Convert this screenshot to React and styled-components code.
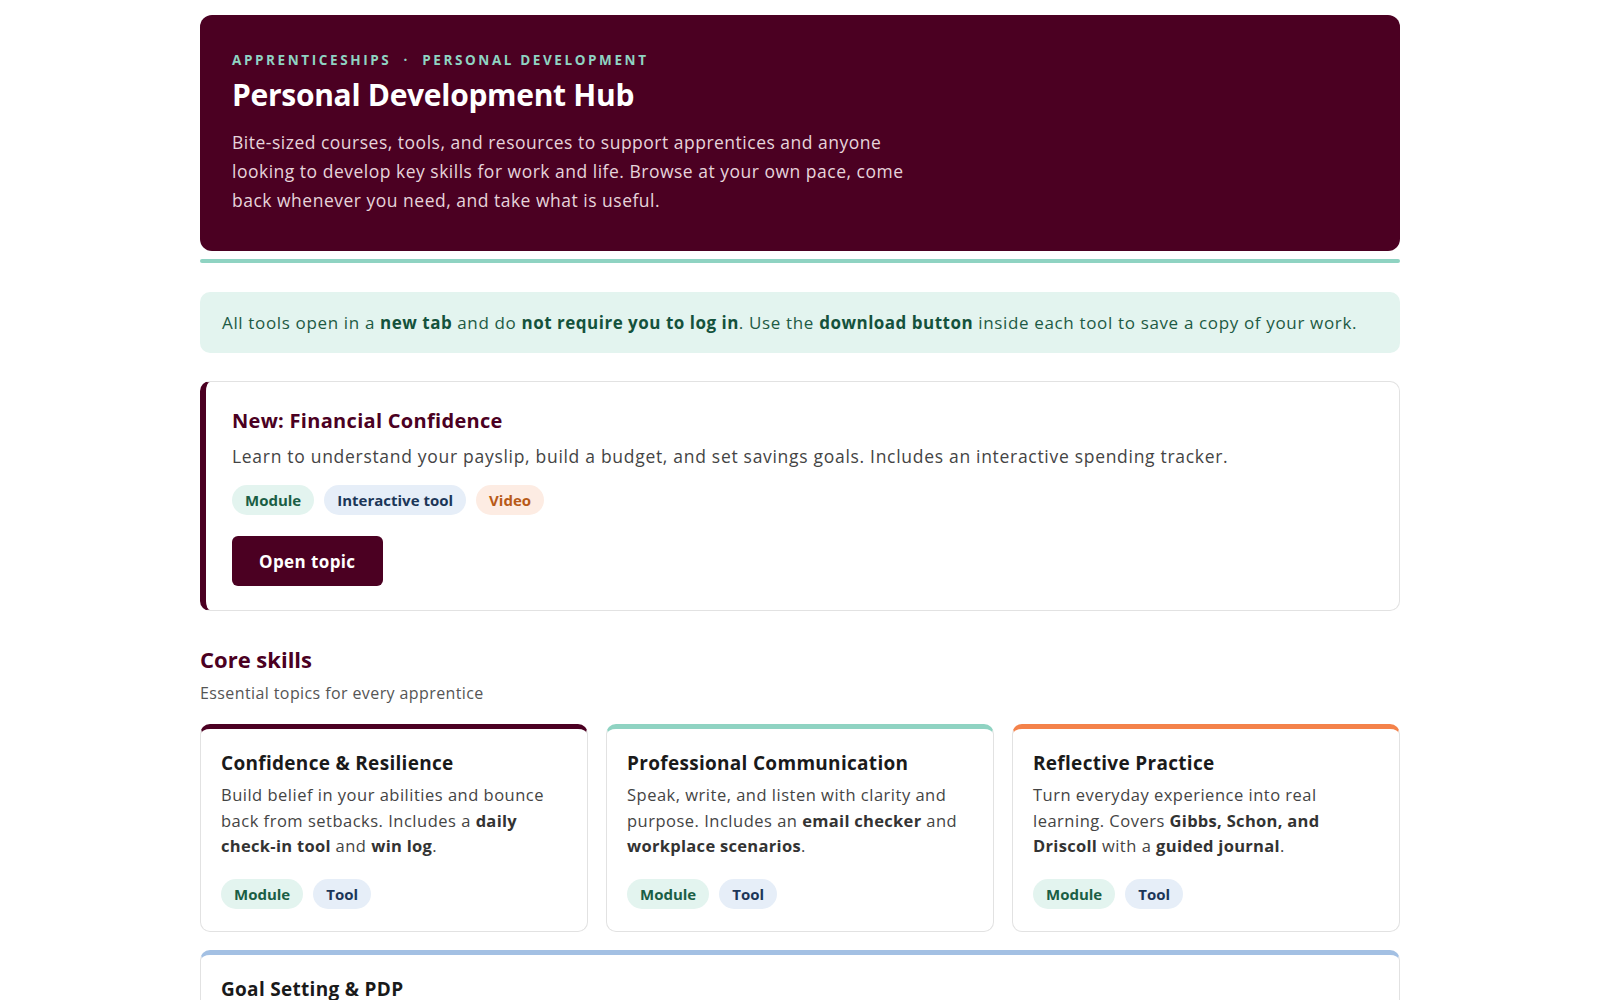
import React from 'react';
import styled, { createGlobalStyle } from 'styled-components';

const GlobalStyle = createGlobalStyle`
  body {
    margin: 0;
    background: #ffffff;
    font-family: "Open Sans", "Liberation Sans", sans-serif;
    color: #333;
  }
  * { box-sizing: border-box; }
`;

const Page = styled.div`
  width: 1200px;
  margin: 0 auto;
  padding: 15px 0 40px;
`;

const Hero = styled.header`
  background: #4b0022;
  border-radius: 12px;
  padding: 36px 32px 36px;
  color: #fff;
`;

const Eyebrow = styled.div`
  font-size: 13.5px;
  font-weight: 700;
  letter-spacing: 2.6px;
  text-transform: uppercase;
  color: #8fd3c2;
`;

const HeroTitle = styled.h1`
  margin: 5px 0 13px;
  font-size: 30px;
  font-weight: 700;
  letter-spacing: -0.3px;
`;

const HeroText = styled.p`
  margin: 0;
  max-width: 690px;
  font-size: 17.5px;
  line-height: 29px;
  letter-spacing: 0.5px;
  color: #e6d4db;
`;

const Rule = styled.div`
  height: 4px;
  border-radius: 2px;
  background: #8fd3c2;
  margin: 8px 0 0;
`;

const Notice = styled.div`
  margin-top: 29px;
  background: #e3f4ef;
  border-radius: 10px;
  padding: 17px 22px;
  font-size: 17px;
  line-height: 27px;
  letter-spacing: 0.65px;
  color: #1d5a44;

  strong { font-weight: 700; color: #14523c; letter-spacing: 0.5px; }
`;

const Featured = styled.section`
  margin-top: 28px;
  border: 1px solid #e2e2e2;
  border-left: 6px solid #4b0022;
  border-radius: 10px;
  padding: 25px 26px 24px;
`;

const FeaturedTitle = styled.h2`
  margin: 0;
  font-size: 20px;
  font-weight: 700;
  letter-spacing: 0.3px;
  color: #4b0022;
`;

const FeaturedText = styled.p`
  margin: 9px 0 0;
  font-size: 17.5px;
  line-height: 27px;
  letter-spacing: 0.7px;
  color: #444;
`;

const Tags = styled.div`
  display: flex;
  gap: 10px;
  margin-top: ${(p) => p.$top || 15}px;
`;

const tagColors = {
  module: ['#e3f4ef', '#1b5e45'],
  tool: ['#e6eef8', '#1c3658'],
  video: ['#fdece3', '#b85a18'],
};

const Tag = styled.span`
  display: inline-flex;
  align-items: center;
  height: 30px;
  padding: 0 13px;
  border-radius: 15px;
  font-size: 15px;
  font-weight: 700;
  background: ${(p) => tagColors[p.$kind][0]};
  color: ${(p) => tagColors[p.$kind][1]};
`;

const Button = styled.button`
  margin-top: 21px;
  height: 50px;
  padding: 0 27px;
  border: none;
  border-radius: 6px;
  background: #4b0022;
  color: #fff;
  font-family: inherit;
  font-size: 17px;
  font-weight: 700;
  letter-spacing: 0.4px;
  cursor: pointer;
`;

const SectionHead = styled.div`
  margin-top: 33px;
`;

const SectionTitle = styled.h2`
  margin: 0;
  font-size: 22px;
  font-weight: 700;
  color: #4b0022;
`;

const SectionSub = styled.p`
  margin: 8px 0 0;
  font-size: 16px;
  letter-spacing: 0.4px;
  color: #555;
`;

const Grid = styled.div`
  display: grid;
  grid-template-columns: repeat(3, 1fr);
  gap: 18px 18px;
  margin-top: 20px;
`;

const Card = styled.article`
  border: 1px solid #e2e2e2;
  border-top: 5px solid ${(p) => p.$accent};
  border-radius: 10px;
  padding: 21px 20px 22px;
  grid-column: ${(p) => (p.$wide ? '1 / -1' : 'auto')};
`;

const CardTitle = styled.h3`
  margin: 0;
  font-size: 19px;
  font-weight: 700;
  letter-spacing: 0.3px;
  color: #1a1a1a;
`;

const CardText = styled.p`
  margin: 6px 0 0;
  font-size: 16.5px;
  line-height: 25.5px;
  letter-spacing: 0.5px;
  color: #444;

  strong { color: #333; font-weight: 700; letter-spacing: 0.3px; }
`;

const cards = [
  {
    title: 'Confidence & Resilience',
    accent: '#4b0022',
    text: (
      <>Build belief in your abilities and bounce back from setbacks. Includes a <strong>daily check-in tool</strong> and <strong>win log</strong>.</>
    ),
  },
  {
    title: 'Professional Communication',
    accent: '#8fd3c2',
    text: (
      <>Speak, write, and listen with clarity and purpose. Includes an <strong>email checker</strong> and <strong>workplace scenarios</strong>.</>
    ),
  },
  {
    title: 'Reflective Practice',
    accent: '#f4824a',
    text: (
      <>Turn everyday experience into real learning. Covers <strong>Gibbs, Schon, and Driscoll</strong> with a <strong>guided journal</strong>.</>
    ),
  },
  {
    title: 'Goal Setting & PDP',
    accent: '#a3c0e3',
    wide: true,
    text: (
      <>Set SMART goals and build a <strong>personal development plan</strong> you can revisit and update.</>
    ),
  },
];

export default function App() {
  return (
    <>
      <GlobalStyle />
      <Page>
        <Hero>
          <Eyebrow>Apprenticeships &nbsp;·&nbsp; Personal Development</Eyebrow>
          <HeroTitle>Personal Development Hub</HeroTitle>
          <HeroText>
            Bite-sized courses, tools, and resources to support apprentices and anyone
            looking to develop key skills for work and life. Browse at your own pace, come
            back whenever you need, and take what is useful.
          </HeroText>
        </Hero>
        <Rule />

        <Notice>
          All tools open in a <strong>new tab</strong> and do <strong>not require you to log in</strong>. Use the{' '}
          <strong>download button</strong> inside each tool to save a copy of your work.
        </Notice>

        <Featured>
          <FeaturedTitle>New: Financial Confidence</FeaturedTitle>
          <FeaturedText>
            Learn to understand your payslip, build a budget, and set savings goals. Includes an interactive spending tracker.
          </FeaturedText>
          <Tags>
            <Tag $kind="module">Module</Tag>
            <Tag $kind="tool">Interactive tool</Tag>
            <Tag $kind="video">Video</Tag>
          </Tags>
          <Button>Open topic</Button>
        </Featured>

        <SectionHead>
          <SectionTitle>Core skills</SectionTitle>
          <SectionSub>Essential topics for every apprentice</SectionSub>
        </SectionHead>

        <Grid>
          {cards.map((c) => (
            <Card key={c.title} $accent={c.accent} $wide={c.wide}>
              <CardTitle>{c.title}</CardTitle>
              <CardText>{c.text}</CardText>
              <Tags $top={20}>
                <Tag $kind="module">Module</Tag>
                <Tag $kind="tool">Tool</Tag>
              </Tags>
            </Card>
          ))}
        </Grid>
      </Page>
    </>
  );
}
